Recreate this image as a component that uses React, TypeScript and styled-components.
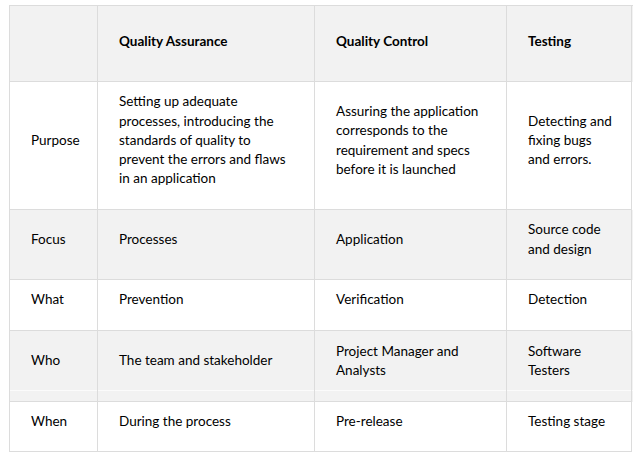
import React from "react";
import styled, { createGlobalStyle, css } from "styled-components";

const Global = createGlobalStyle`
  html, body { margin: 0; padding: 0; background: #ffffff; }
  body { font-family: Lato, "Open Sans", "Liberation Sans", sans-serif; color: #000; }
`;

const COLS = "88px 217px 192px 125px";

const Page = styled.div`
  padding: 5px 0 0 9px;
`;

const Table = styled.div`
  display: flex;
  flex-direction: column;
  width: 623px;
  border-top: 1px solid #dcdcdc;
  border-left: 1px solid #dcdcdc;
`;

const Row = styled.div<{ $h: number; $shaded?: boolean; $stripe?: boolean }>`
  display: grid;
  grid-template-columns: ${COLS};
  height: ${(p) => p.$h}px;
  background: ${(p) => (p.$shaded ? "#f2f2f2" : "#ffffff")};
  ${(p) =>
    p.$stripe &&
    css`
      background: linear-gradient(
        to top,
        #f2f2f2 0,
        #f2f2f2 11px,
        #fbfbfb 11px,
        #fbfbfb 12px,
        #f2f2f2 12px
      );
    `}
`;

const Cell = styled.div<{ $head?: boolean }>`
  display: flex;
  align-items: center;
  box-sizing: border-box;
  border-right: 1px solid #dcdcdc;
  border-bottom: 1px solid #dcdcdc;
  padding: ${(p) => (p.$head ? "0 12px 3px 21px" : "0 12px 10px 21px")};
  font-size: 13.5px;
  line-height: 19.3px;
  font-weight: ${(p) => (p.$head ? 700 : 400)};
  white-space: nowrap;
`;

type RowData = { label: string; cells: React.ReactNode[]; h: number };

const rows: RowData[] = [
  {
    label: "Purpose",
    h: 128,
    cells: [
      <>
        Setting up adequate
        <br />
        processes, introducing the
        <br />
        standards of quality to
        <br />
        prevent the errors and flaws
        <br />
        in an application
      </>,
      <>
        Assuring the application
        <br />
        corresponds to the
        <br />
        requirement and specs
        <br />
        before it is launched
      </>,
      <>
        Detecting and
        <br />
        fixing bugs
        <br />
        and errors.
      </>,
    ],
  },
  {
    label: "Focus",
    h: 70,
    cells: [
      "Processes",
      "Application",
      <>
        Source code
        <br />
        and design
      </>,
    ],
  },
  { label: "What", h: 51, cells: ["Prevention", "Verification", "Detection"] },
  {
    label: "Who",
    h: 71,
    cells: [
      "The team and stakeholder",
      <>
        Project Manager and
        <br />
        Analysts
      </>,
      <>
        Software
        <br />
        Testers
      </>,
    ],
  },
  { label: "When", h: 50, cells: ["During the process", "Pre-release", "Testing stage"] },
];

export default function App() {
  return (
    <Page>
      <Global />
      <Table>
        <Row $h={76} $shaded>
          <Cell $head />
          <Cell $head>Quality Assurance</Cell>
          <Cell $head>Quality Control</Cell>
          <Cell $head>Testing</Cell>
        </Row>
        {rows.map((r, i) => (
          <Row key={r.label} $h={r.h} $shaded={i % 2 === 1} $stripe={r.label === "Who"}>
            <Cell>{r.label}</Cell>
            {r.cells.map((c, j) => (
              <Cell key={j}>
                <span>{c}</span>
              </Cell>
            ))}
          </Row>
        ))}
      </Table>
    </Page>
  );
}
